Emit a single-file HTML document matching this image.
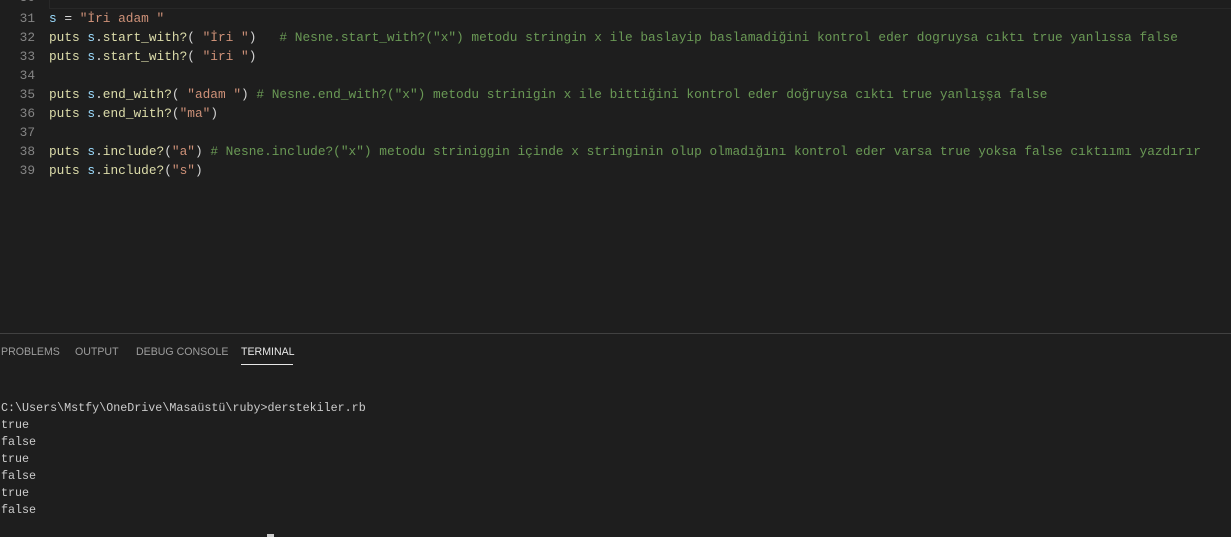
<!DOCTYPE html>
<html><head><meta charset="utf-8"><style>
body{margin:0;width:1231px;height:537px;background:#1e1e1e;overflow:hidden;position:relative;font-family:"Liberation Mono",monospace;}
.ln{position:absolute;left:0;width:35px;text-align:right;color:#858585;font-size:12.8px;}
.cd{position:absolute;left:49px;white-space:pre;color:#d4d4d4;font-size:12.8px;}
.f{color:#dcdcaa}.v{color:#9cdcfe}.s{color:#ce9178}.c{color:#6a9955}
.hl{position:absolute;left:49px;top:-10px;width:1182px;height:17px;border:1px solid #282828;}
.sep{position:absolute;left:0;top:333px;width:1231px;height:1px;background:#414141;}
.tab{position:absolute;top:346px;font-family:"Liberation Sans",sans-serif;font-size:10.6px;color:#9d9d9d;}
.term{position:absolute;left:1px;top:400px;white-space:pre;color:#cccccc;font-size:11.7px;line-height:17px;}
</style></head><body>
<div class="hl"></div>
<div class="ln" style="top:-10px">30</div>
<div class="ln" style="top:11px">31</div><div class="cd" style="top:11px"><span class="v">s</span> = <span class="s">"İri adam "</span></div>
<div class="ln" style="top:30px">32</div><div class="cd" style="top:30px"><span class="f">puts</span> <span class="v">s</span>.<span class="f">start_with?</span>( <span class="s">"İri "</span>)   <span class="c"># Nesne.start_with?("x") metodu stringin x ile baslayip baslamadiğini kontrol eder dogruysa cıktı true yanlıssa false</span></div>
<div class="ln" style="top:49px">33</div><div class="cd" style="top:49px"><span class="f">puts</span> <span class="v">s</span>.<span class="f">start_with?</span>( <span class="s">"iri "</span>)</div>
<div class="ln" style="top:68px">34</div>
<div class="ln" style="top:87px">35</div><div class="cd" style="top:87px"><span class="f">puts</span> <span class="v">s</span>.<span class="f">end_with?</span>( <span class="s">"adam "</span>) <span class="c"># Nesne.end_with?("x") metodu strinigin x ile bittiğini kontrol eder doğruysa cıktı true yanlışşa false</span></div>
<div class="ln" style="top:106px">36</div><div class="cd" style="top:106px"><span class="f">puts</span> <span class="v">s</span>.<span class="f">end_with?</span>(<span class="s">"ma"</span>)</div>
<div class="ln" style="top:125px">37</div>
<div class="ln" style="top:144px">38</div><div class="cd" style="top:144px"><span class="f">puts</span> <span class="v">s</span>.<span class="f">include?</span>(<span class="s">"a"</span>) <span class="c"># Nesne.include?("x") metodu striniggin içinde x stringinin olup olmadığını kontrol eder varsa true yoksa false cıktıımı yazdırır</span></div>
<div class="ln" style="top:163px">39</div><div class="cd" style="top:163px"><span class="f">puts</span> <span class="v">s</span>.<span class="f">include?</span>(<span class="s">"s"</span>)</div>
<div class="sep"></div>
<div class="tab" style="left:1px">PROBLEMS</div>
<div class="tab" style="left:75px">OUTPUT</div>
<div class="tab" style="left:136px">DEBUG CONSOLE</div>
<div class="tab" style="left:241px;color:#e7e7e7">TERMINAL</div>
<div style="position:absolute;left:241px;top:364px;width:52px;height:1px;background:#e7e7e7"></div>
<div class="term">C:\Users\Mstfy\OneDrive\Masaüstü\ruby>derstekiler.rb
true
false
true
false
true
false</div>
<div style="position:absolute;left:267px;top:534px;width:7px;height:3px;background:#cccccc"></div>
</body></html>
